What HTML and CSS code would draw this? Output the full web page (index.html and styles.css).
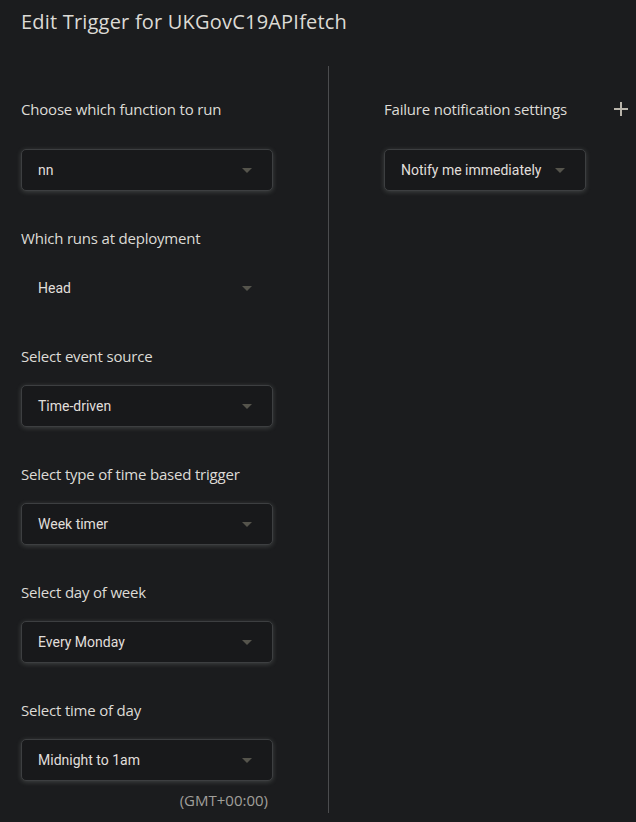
FILE: index.html
```html
<!DOCTYPE html>
<html>
<head>
<meta charset="utf-8">
<link rel="stylesheet" href="styles.css">
</head>
<body>
<h1 class="title">Edit Trigger for UKGovC19APIfetch</h1>
<div class="main">
  <div class="col-left">
    <div class="field first">
      <div class="label">Choose which function to run</div>
      <div class="select"><span>nn</span><i class="arrow"></i></div>
    </div>
    <div class="field">
      <div class="label">Which runs at deployment</div>
      <div class="select flat"><span>Head</span><i class="arrow"></i></div>
    </div>
    <div class="field">
      <div class="label">Select event source</div>
      <div class="select"><span>Time-driven</span><i class="arrow"></i></div>
    </div>
    <div class="field">
      <div class="label">Select type of time based trigger</div>
      <div class="select"><span>Week timer</span><i class="arrow"></i></div>
    </div>
    <div class="field">
      <div class="label">Select day of week</div>
      <div class="select"><span>Every Monday</span><i class="arrow"></i></div>
    </div>
    <div class="field">
      <div class="label">Select time of day</div>
      <div class="select"><span>Midnight to 1am</span><i class="arrow"></i></div>
      <div class="tz">(GMT+00:00)</div>
    </div>
  </div>
  <div class="col-right">
    <div class="field first">
      <div class="label-row">
        <div class="label">Failure notification settings</div>
        <svg class="plus" width="14" height="14" viewBox="0 0 14 14"><path d="M7 0v14M0 7h14" stroke="#b9b5ab" stroke-width="2" fill="none"/></svg>
      </div>
      <div class="select small"><span>Notify me immediately</span><i class="arrow"></i></div>
    </div>
  </div>
</div>
</body>
</html>
```

FILE: styles.css
```css
html, body {
  margin: 0;
  padding: 0;
  background: #1b1c1e;
  color: #e2e1dd;
}
body {
  width: 636px;
  height: 822px;
  overflow: hidden;
  font-family: "Open Sans", "Noto Sans", sans-serif;
}
.title {
  margin: 0;
  padding: 9px 0 0 21px;
  height: 56px;
  box-sizing: border-box;
  font-size: 20px;
  font-weight: 400;
  line-height: 26px;
  color: #dcdad5;
  letter-spacing: 0.2px;
}
.main {
  display: flex;
  padding-top: 10px;
}
.col-left {
  padding: 34px 0 0 21px;
  border-right: 1px solid #4b4c4e;
  height: 747px;
  box-sizing: border-box;
  width: 329px;
}
.col-right {
  flex: 1;
  padding: 34px 8px 0 55px;
}
.field {
  display: flex;
  flex-direction: column;
  margin-bottom: 38px;
}
.label {
  font-size: 15px;
  line-height: 18px;
  height: 20px;
  color: #dddbd6;
  letter-spacing: -0.2px;
  margin-bottom: 18px;
}
.field.first .label {
  margin-bottom: 29px;
}
.label-row {
  display: flex;
  justify-content: space-between;
  align-items: flex-start;
}
.plus {
  margin-top: 2px;
}
.select {
  width: 252px;
  height: 42px;
  box-sizing: border-box;
  border: 1px solid #3d3f41;
  border-radius: 5px;
  background: #18191b;
  box-shadow: 0 1px 5px rgba(200, 210, 200, 0.22);
  display: flex;
  align-items: center;
  justify-content: space-between;
  padding: 0 20px 0 16px;
  font-family: Roboto, "Liberation Sans", sans-serif;
  font-size: 14px;
  color: #e0dfdb;
}
.select.flat {
  border-color: transparent;
  background: transparent;
  box-shadow: none;
}
.select.small {
  width: 202px;
  padding-right: 20px;
}
.arrow {
  width: 0;
  height: 0;
  border-left: 5px solid transparent;
  border-right: 5px solid transparent;
  border-top: 5px solid #55544c;
}
.tz {
  width: 252px;
  text-align: right;
  box-sizing: border-box;
  padding-right: 5px;
  margin-top: 9px;
  font-size: 15px;
  line-height: 20px;
  color: #a09f9a;
}
```
